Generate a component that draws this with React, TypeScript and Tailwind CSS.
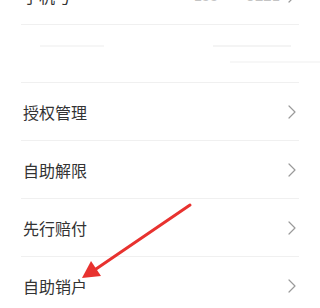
import React from "react";

const FONT = { fontFamily: '"Noto Sans CJK SC", "Noto Sans", sans-serif' };

function Chevron() {
  return (
    <svg width="8" height="14" viewBox="0 0 8 14" fill="none" className="shrink-0">
      <path d="M1 1 L7 7 L1 13" stroke="#9a9a9a" strokeWidth="1.2" strokeLinecap="round" strokeLinejoin="round" />
    </svg>
  );
}

const items = ["授权管理", "自助解限", "先行赔付", "自助销户"];

export default function App() {
  return (
    <div className="relative w-[320px] h-[308px] overflow-hidden bg-white" style={FONT}>
      <div className="px-[21px] -mt-[33px]">
        {/* phone row, mostly scrolled off */}
        <div className="h-[58px] flex items-center justify-between border-b border-[#f0f0f0] pl-[2px] pr-[3px]">
          <span className="text-[16px] text-[#333]">手机号</span>
          <div className="flex items-center gap-[8px]">
            <span className="text-[15px] text-[#c4c4c4]">155****9221</span>
            <Chevron />
          </div>
        </div>

        {/* blurred row */}
        <div className="h-[58px] border-b border-[#f0f0f0] flex flex-col justify-center gap-[14px]">
          <div className="flex justify-between items-center">
            <div className="ml-[19px] w-[64px] h-[2px] bg-[#f6f6f6]" />
            <div className="mr-[8px] w-[78px] h-[2px] bg-[#f4f4f4]" />
          </div>
          <div className="flex justify-end">
            <div className="w-[90px] h-[2px] bg-[#f7f7f7] -mr-[21px]" />
          </div>
        </div>

        {items.map((label) => (
          <div
            key={label}
            className="h-[58px] flex items-center justify-between border-b border-[#f0f0f0] pl-[2px] pr-[3px]"
          >
            <span className="text-[16px] text-[#333]">{label}</span>
            <Chevron />
          </div>
        ))}
      </div>

      {/* red annotation arrow */}
      <svg className="absolute left-0 top-0 pointer-events-none" width="320" height="308" viewBox="0 0 320 308">
        <line x1="190" y1="205" x2="96" y2="269" stroke="#e8322f" strokeWidth="3" strokeLinecap="round" />
        <polygon points="82,278 91,261 101,276" fill="#e8322f" />
      </svg>
    </div>
  );
}
